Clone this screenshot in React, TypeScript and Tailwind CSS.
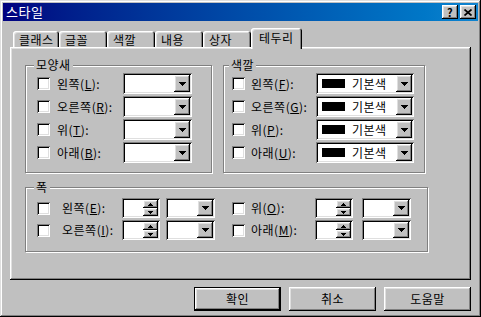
import React from 'react';

const raised = 'shadow-[inset_-1px_-1px_#000,inset_1px_1px_#fff,inset_-2px_-2px_#808080,inset_2px_2px_#dfdfdf]';
const sunken = 'shadow-[inset_1px_1px_#808080,inset_-1px_-1px_#fff,inset_2px_2px_#000,inset_-2px_-2px_#dfdfdf]';
const etched = 'border border-[#808080] shadow-[inset_1px_1px_#fff,1px_1px_#fff]';

const Down = () => (
  <svg width="7" height="4" viewBox="0 0 7 4" shapeRendering="crispEdges">
    <polygon points="0,0 7,0 4,4 3,4" fill="#000" />
  </svg>
);

const Check = ({ className = '' }: { className?: string }) => (
  <span className={`h-[13px] w-[13px] shrink-0 bg-white ${sunken} ${className}`} />
);

const Combo = ({ className = '', children }: { className?: string; children?: React.ReactNode }) => (
  <div className={`flex shrink-0 bg-white p-[2px] ${sunken} ${className}`}>
    <div className="flex flex-1 items-center overflow-hidden">{children}</div>
    <div className={`flex w-[16px] items-center justify-center bg-[#c0c0c0] ${raised}`}>
      <Down />
    </div>
  </div>
);

const Spin = () => (
  <div className={`flex h-[20px] w-[38px] shrink-0 bg-white p-[2px] ${sunken}`}>
    <div className="flex-1" />
    <div className="flex w-[15px] flex-col">
      <div className={`flex flex-1 items-center justify-center bg-[#c0c0c0] ${raised}`}>
        <svg width="5" height="3" viewBox="0 0 5 3" shapeRendering="crispEdges">
          <polygon points="2,0 3,0 5,3 0,3" fill="#000" />
        </svg>
      </div>
      <div className={`flex flex-1 items-center justify-center bg-[#c0c0c0] ${raised}`}>
        <svg width="5" height="3" viewBox="0 0 5 3" shapeRendering="crispEdges">
          <polygon points="0,0 5,0 3,3 2,3" fill="#000" />
        </svg>
      </div>
    </div>
  </div>
);

const Group = ({ title, titleLeft, className, children }: { title: string; titleLeft: string; className: string; children: React.ReactNode }) => (
  <div className={`relative shrink-0 ${etched} ${className}`}>
    <span className={`absolute -top-[8px] ${titleLeft} bg-[#c0c0c0] px-[2px] leading-[14px]`}>{title}</span>
    {children}
  </div>
);

const U = ({ k }: { k: string }) => <span className="underline">{k}</span>;

const tabs = [
  { label: '클래스', w: 'w-[46px]' },
  { label: '글꼴', w: 'w-[48px]' },
  { label: '색깔', w: 'w-[48px]' },
  { label: '내용', w: 'w-[48px]' },
  { label: '상자', w: 'w-[48px]' },
];

const shapeRows = [
  { pre: '왼쪽', k: 'L' },
  { pre: '오른쪽', k: 'R' },
  { pre: '위', k: 'T' },
  { pre: '아래', k: 'B' },
];

const colorRows = [
  { pre: '왼쪽', k: 'F' },
  { pre: '오른쪽', k: 'G' },
  { pre: '위', k: 'P' },
  { pre: '아래', k: 'U' },
];

const widthRows = [
  { l: '왼쪽', lk: 'E', r: '위', rk: 'O' },
  { l: '오른쪽', lk: 'I', r: '아래', rk: 'M' },
];

export default function App() {
  return (
    <div className="flex h-[317px] w-[481px] flex-col bg-[#c0c0c0] p-[3px] font-['Noto_Sans_CJK_KR','Noto_Sans',sans-serif] text-[12px] leading-[14px] tracking-[0.5px] text-black shadow-[inset_-1px_-1px_#000,inset_1px_1px_#dfdfdf,inset_-2px_-2px_#808080,inset_2px_2px_#fff]">
      {/* title bar */}
      <div className="flex h-[18px] shrink-0 items-center bg-linear-to-r from-[#000080] to-[#1084d0] pl-[3px] pr-[2px]">
        <span className="text-[13px] text-white">스타일</span>
        <div className="ml-auto flex gap-[2px]">
          <div className={`flex h-[14px] w-[16px] items-center justify-center bg-[#c0c0c0] text-[11px] font-bold leading-none ${raised}`}>?</div>
          <div className={`flex h-[14px] w-[16px] items-center justify-center bg-[#c0c0c0] ${raised}`}>
            <svg width="8" height="7" viewBox="0 0 8 7">
              <path d="M0.5 0.5L7.5 6.5M7.5 0.5L0.5 6.5" stroke="#000" strokeWidth="1.7" />
            </svg>
          </div>
        </div>
      </div>

      {/* tabs */}
      <div className="ml-[10px] mt-[7px] flex items-end">
        {tabs.map((t) => (
          <div
            key={t.label}
            className={`flex h-[16px] ${t.w} items-center rounded-t-[3px] pl-[6px] pt-[1px] shadow-[inset_1px_1px_#fff,inset_-1px_0_#000,inset_-2px_0_#808080,inset_2px_2px_#dfdfdf]`}
          >
            {t.label}
          </div>
        ))}
        <div className="relative z-10 -mb-[2px] flex h-[21px] w-[51px] items-start rounded-t-[3px] bg-[#c0c0c0] pl-[8px] pt-[3px] shadow-[inset_1px_1px_#fff,inset_-1px_0_#000,inset_-2px_0_#808080,inset_2px_2px_#dfdfdf]">
          테두리
        </div>
      </div>

      {/* panel */}
      <div className={`ml-[7px] flex h-[233px] w-[461px] shrink-0 flex-col pl-[15px] pt-[18px] ${raised}`}>
        <div className="flex gap-[11px]">
          <Group title="모양새" titleLeft="left-[8px]" className="h-[108px] w-[187px] pl-[11px] pt-[7px]">
            <div className="flex flex-col gap-[2px]">
              {shapeRows.map((r) => (
                <div key={r.k} className="flex h-[21px] items-center">
                  <Check />
                  <span className="ml-[7px] w-[66px] whitespace-nowrap">
                    {r.pre}(<U k={r.k} />):
                  </span>
                  <Combo className="h-[21px] w-[69px]" />
                </div>
              ))}
            </div>
          </Group>

          <Group title="색깔" titleLeft="left-[5px]" className="h-[108px] w-[202px] pl-[8px] pt-[7px]">
            <div className="flex flex-col gap-[2px]">
              {colorRows.map((r) => (
                <div key={r.k} className="flex h-[21px] items-center">
                  <Check />
                  <span className="ml-[6px] w-[65px] whitespace-nowrap">
                    {r.pre}(<U k={r.k} />):
                  </span>
                  <Combo className="h-[21px] w-[98px]">
                    <span className="ml-[4px] h-[9px] w-[23px] shrink-0 bg-black" />
                    <span className="ml-[7px] whitespace-nowrap">기본색</span>
                  </Combo>
                </div>
              ))}
            </div>
          </Group>
        </div>

        <Group title="폭" titleLeft="left-[8px]" className="mt-[14px] h-[65px] w-[403px] pl-[11px] pt-[10px]">
          <div className="flex flex-col gap-[2px]">
            {widthRows.map((r) => (
              <div key={r.lk} className="flex h-[20px] items-center">
                <Check />
                <span className="ml-[12px] w-[60px] whitespace-nowrap">
                  {r.l}(<U k={r.lk} />):
                </span>
                <Spin />
                <Combo className="ml-[6px] h-[20px] w-[49px]" />
                <Check className="ml-[17px]" />
                <span className="ml-[6px] w-[64px] whitespace-nowrap">
                  {r.r}(<U k={r.rk} />):
                </span>
                <Spin />
                <Combo className="ml-[9px] h-[20px] w-[49px]" />
              </div>
            ))}
          </div>
        </Group>
      </div>

      {/* buttons */}
      <div className="mt-[7px] flex justify-end gap-[8px] pr-[7px]">
        <div className="flex h-[24px] w-[87px] items-center justify-center shadow-[inset_0_0_0_1px_#000,inset_-2px_-2px_#000,inset_2px_2px_#fff,inset_-3px_-3px_#808080,inset_3px_3px_#dfdfdf]">
          확인
        </div>
        <div className={`flex h-[24px] w-[87px] items-center justify-center ${raised}`}>취소</div>
        <div className={`flex h-[24px] w-[87px] items-center justify-center ${raised}`}>도움말</div>
      </div>
    </div>
  );
}
